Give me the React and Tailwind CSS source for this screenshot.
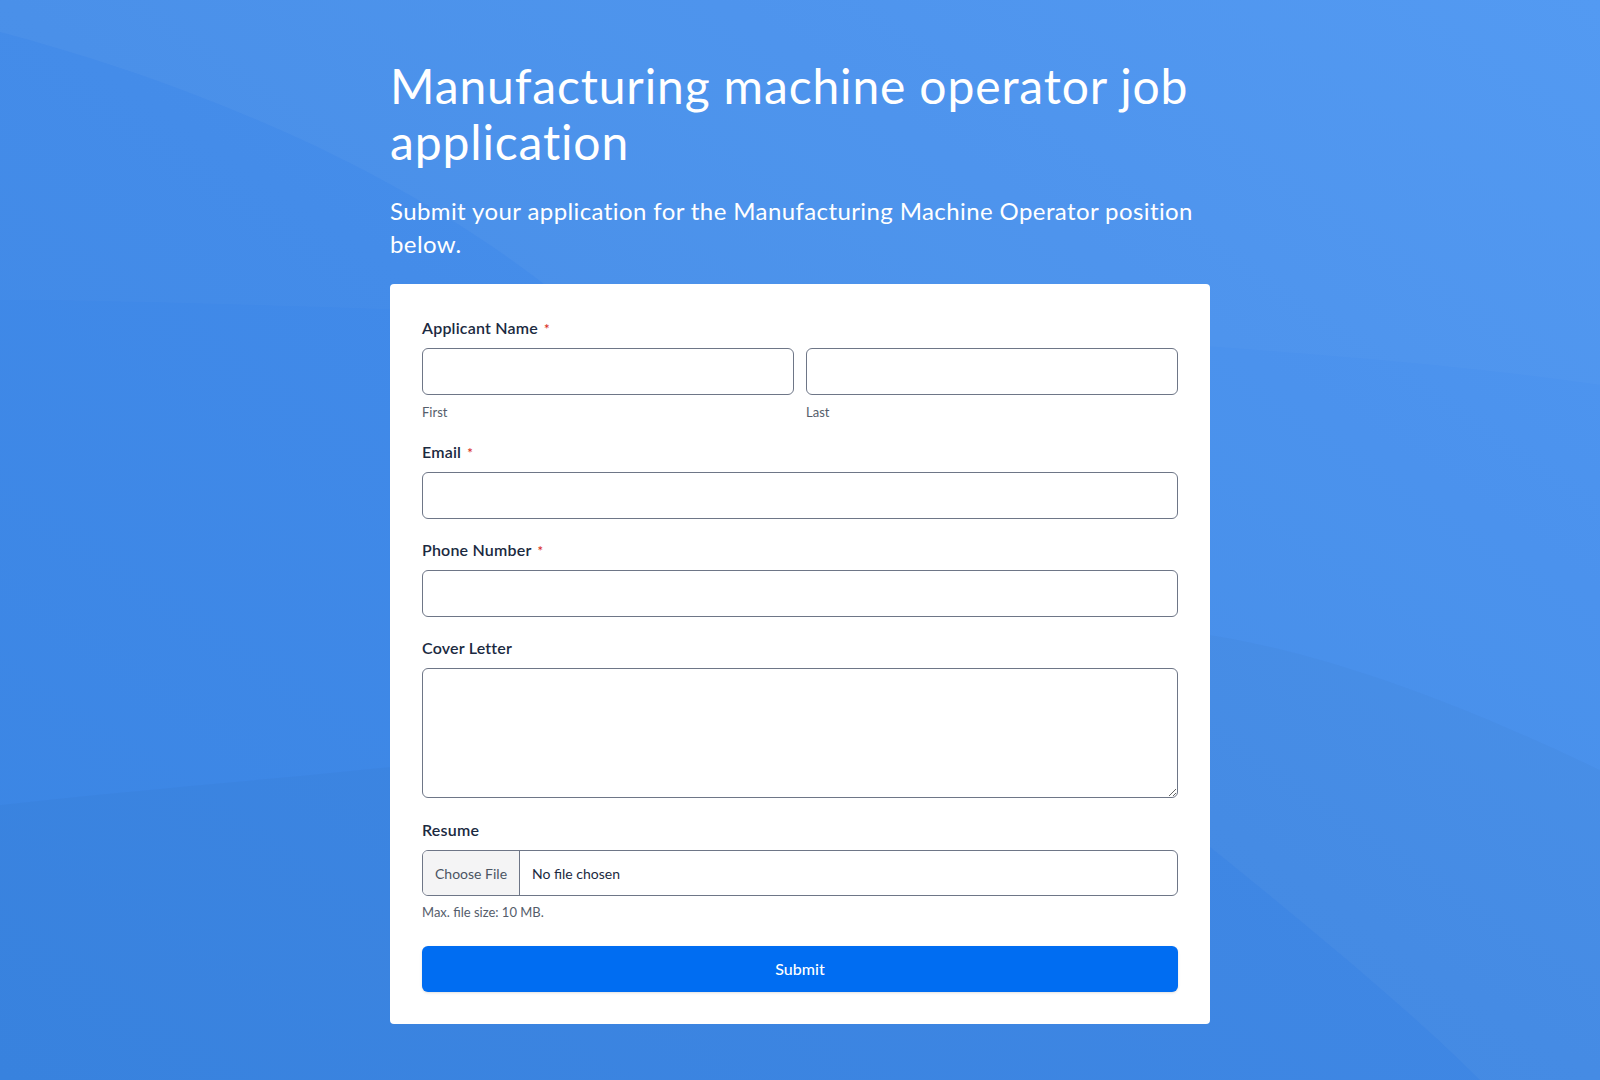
import React from "react";

function Label({ children, required }) {
  return (
    <div className="flex items-center h-6 mb-2 text-[16px] font-semibold text-[#1b2a41] tracking-[0.2px]">
      <span>{children}</span>
      {required && <span className="ml-1.5 mt-[3px] text-[13px] text-[#d93025] leading-none">*</span>}
    </div>
  );
}

function Input() {
  return (
    <input
      type="text"
      className="block w-full h-[47px] rounded-[6px] border border-[#6e7687] bg-white px-3 text-[15px] outline-none"
    />
  );
}

export default function App() {
  return (
    <div
      className="relative min-h-[1080px] w-full overflow-hidden bg-gradient-to-tr from-[#3a85e3] via-[#418ae9] to-[#4a95f2]"
      style={{ fontFamily: "Lato, 'Noto Sans', sans-serif" }}
    >
      <svg
        className="pointer-events-none absolute inset-0 h-full w-full"
        viewBox="0 0 1600 1080"
        preserveAspectRatio="none"
      >
        <path d="M0 0 L1600 0 L1600 1080 L1480 1080 C1300 900 900 620 600 330 C420 170 180 80 0 32 Z" fill="#ffffff" fillOpacity="0.035" />
        <path d="M0 0 L1600 0 L1600 385 C1400 355 1000 330 700 320 C400 310 150 300 0 300 Z" fill="#ffffff" fillOpacity="0.02" />
        <path d="M0 805 C300 770 700 760 1000 640 C1150 600 1350 650 1600 770 L1600 1080 L0 1080 Z" fill="#000000" fillOpacity="0.02" />
      </svg>

      <div className="relative mx-auto w-[820px] pt-[58px] pb-[56px]">
        <h1 className="text-[48px] leading-[56px] font-normal text-white tracking-[0.85px]">
          Manufacturing machine operator job application
        </h1>
        <p className="mt-6 text-[24px] leading-[33px] font-normal text-white tracking-[0.4px]">
          Submit your application for the Manufacturing Machine Operator position below.
        </p>

        <div className="mt-6 rounded-[4px] bg-white p-8">
          <Label required>Applicant Name</Label>
          <div className="grid grid-cols-2 gap-3">
            <div>
              <Input />
              <div className="mt-2 text-[13px] leading-[18px] text-[#555d6b]">First</div>
            </div>
            <div>
              <Input />
              <div className="mt-2 text-[13px] leading-[18px] text-[#555d6b]">Last</div>
            </div>
          </div>

          <div className="mt-[19px]">
            <Label required>Email</Label>
            <Input />
          </div>

          <div className="mt-[19px]">
            <Label required>Phone Number</Label>
            <Input />
          </div>

          <div className="mt-[19px]">
            <Label>Cover Letter</Label>
            <textarea className="block w-full h-[130px] rounded-[6px] border border-[#6e7687] bg-white px-3 py-2 text-[15px] outline-none resize-y" />
          </div>

          <div className="mt-5">
            <Label>Resume</Label>
            <div className="flex h-[46px] w-full overflow-hidden rounded-[6px] border border-[#6e7687] bg-white">
              <div className="flex items-center border-r border-[#6e7687] bg-[#f4f4f5] px-3 text-[14px] text-[#4b5563]">
                Choose File
              </div>
              <div className="flex items-center px-3 text-[14px] text-[#1b2a41]">No file chosen</div>
            </div>
            <div className="mt-1.5 text-[13px] leading-5 text-[#555d6b]">Max. file size: 10 MB.</div>
          </div>

          <button
            type="button"
            className="mt-6 flex h-[46px] w-full items-center justify-center rounded-[6px] bg-[#006df2] text-[16px] font-medium text-white shadow-sm"
          >
            Submit
          </button>
        </div>
      </div>
    </div>
  );
}
